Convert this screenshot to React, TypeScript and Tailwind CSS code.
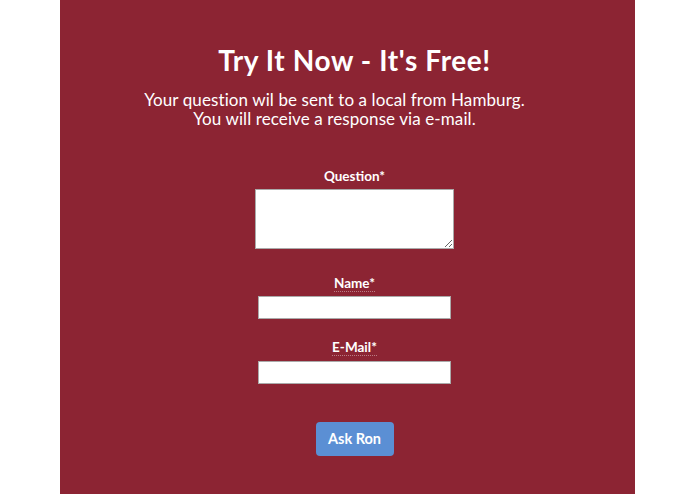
export default function App() {
  return (
    <div className="w-[695px] h-[494px] bg-white flex" style={{ fontFamily: "Lato, 'Open Sans', sans-serif" }}>
      <div className="ml-[60px] w-[575px] h-full bg-[#8c2433] text-white flex flex-col items-center pt-[41px] pl-[14px]">
        <h1 className="text-[28px] font-bold leading-[38px] tracking-[0.6px]">Try It Now - It's Free!</h1>
        <p className="mt-[11px] mr-[40px] text-[17px] leading-[19px] text-center tracking-[0.1px]">
          Your question wil be sent to a local from Hamburg.
          <br />
          You will receive a response via e-mail.
        </p>
        <form className="mt-[39px] flex flex-col items-center">
          <label className="text-[13.5px] font-bold leading-[18px]">Question*</label>
          <textarea className="mt-[4px] w-[199px] h-[60px] bg-white border border-[#aaa] resize-y block" />
          <label className="mt-[25px] text-[13.5px] font-bold leading-[18px]">
            <abbr className="no-underline border-b border-dotted border-white/40">Name*</abbr>
          </label>
          <input className="mt-[4px] w-[193px] h-[23px] bg-white border border-[#aaa] block" />
          <label className="mt-[19px] text-[13.5px] font-bold leading-[18px]">
            <abbr className="no-underline border-b border-dotted border-white/40">E-Mail*</abbr>
          </label>
          <input className="mt-[5px] w-[193px] h-[23px] bg-white border border-[#aaa] block" />
          <button type="button" className="mt-[38px] w-[78px] h-[34px] rounded-[4px] bg-[#5b8fd4] text-white text-[14.5px] font-bold">
            Ask Ron
          </button>
        </form>
      </div>
    </div>
  );
}
